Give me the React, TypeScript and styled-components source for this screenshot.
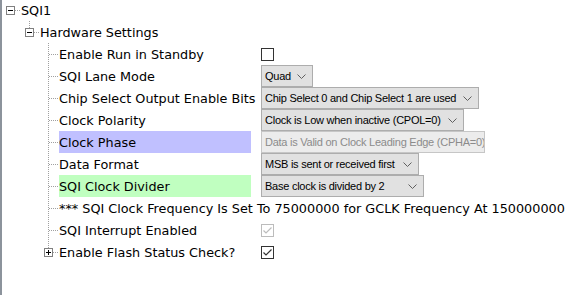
import styled, { createGlobalStyle } from "styled-components"

const GlobalStyle = createGlobalStyle`
  html, body {
    margin: 0;
    padding: 0;
    background: #ffffff;
  }
  body {
    width: 575px;
    height: 295px;
    overflow: hidden;
  }
`

const Panel = styled.div`
  width: 573px;
  height: 296px;
  margin-top: -1px;
  border-left: 2px solid #8c939c;
  font-family: "DejaVu Sans", Verdana, sans-serif;
  font-size: 12.8px;
  color: #000;
`

const Row = styled.div`
  display: grid;
  grid-template-columns: 249px 1fr;
  column-gap: 10px;
  height: 22px;
`

const TreeCell = styled.div<{ $level: number }>`
  display: flex;
  padding-left: ${(p) => p.$level * 19}px;
  min-width: 0;
`

const Label = styled.div<{ $tone?: "blue" | "green" }>`
  flex: 1;
  display: flex;
  align-items: center;
  white-space: nowrap;
  background: ${(p) =>
    p.$tone === "blue" ? "#c0c0ff" : p.$tone === "green" ? "#c0ffc0" : "transparent"};
`

const ControlCell = styled.div`
  display: flex;
  align-items: center;
`

const SelectBox = styled.div<{ $width: number; $disabled?: boolean }>`
  box-sizing: border-box;
  width: ${(p) => p.$width}px;
  height: 22px;
  display: flex;
  align-items: center;
  justify-content: space-between;
  padding: 0 ${(p) => (p.$disabled ? 0 : 6)}px 0 3px;
  border: 1px solid ${(p) => (p.$disabled ? "#c6c6c6" : "#adadad")};
  background: ${(p) => (p.$disabled ? "#ececec" : "#e1e1e1")};
  color: ${(p) => (p.$disabled ? "#8b8b8b" : "#000")};
  font-family: "Liberation Sans", Arial, sans-serif;
  font-size: 11px;
  letter-spacing: -0.25px;
  white-space: nowrap;
  overflow: hidden;
`

const Check = styled.div<{ $disabled?: boolean }>`
  box-sizing: border-box;
  width: 13px;
  height: 13px;
  border: 1px solid ${(p) => (p.$disabled ? "#bcbcbc" : "#333333")};
  background: #fff;
  display: flex;
  align-items: center;
  justify-content: center;
`

type ConnectorProps = {
  line?: boolean
  last?: boolean
  expander?: "open" | "closed"
}

function Connector({ line, last, expander }: ConnectorProps) {
  return (
    <svg width="19" height="22" viewBox="0 0 19 22" shapeRendering="crispEdges" style={{ flex: "none" }}>
      {line && (
        <line x1="8.5" y1="0" x2="8.5" y2={last ? 11 : 22} stroke="#a0a0a0" strokeDasharray="1 1" />
      )}
      <line x1={expander ? 13 : 9} y1="11.5" x2="18" y2="11.5" stroke="#a0a0a0" strokeDasharray="1 1" />
      {expander && (
        <g>
          <rect x="4.5" y="7.5" width="8" height="8" fill="#fff" stroke="#808080" />
          <line x1="6" y1="11.5" x2="11" y2="11.5" stroke="#000" />
          {expander === "closed" && <line x1="8.5" y1="9" x2="8.5" y2="14" stroke="#000" />}
        </g>
      )}
    </svg>
  )
}

function Chevron({ color = "#606060" }: { color?: string }) {
  return (
    <svg width="9" height="5" viewBox="0 0 9 5" style={{ flex: "none" }}>
      <polyline points="0.5,0.5 4.5,4.5 8.5,0.5" fill="none" stroke={color} strokeWidth="1" />
    </svg>
  )
}

function Select({ value, width, disabled }: { value: string; width: number; disabled?: boolean }) {
  return (
    <SelectBox $width={width} $disabled={disabled}>
      <span>{value}</span>
      {!disabled && <Chevron />}
    </SelectBox>
  )
}

function Checkbox({ checked, disabled }: { checked?: boolean; disabled?: boolean }) {
  return (
    <Check $disabled={disabled}>
      {checked && (
        <svg width="11" height="11" viewBox="0 0 11 11">
          <polyline
            points="1.5,5.5 4,8 9.5,2.5"
            fill="none"
            stroke={disabled ? "#bcbcbc" : "#333"}
            strokeWidth="1.2"
          />
        </svg>
      )}
    </Check>
  )
}

type Item = {
  label: string
  tone?: "blue" | "green"
  control?: React.ReactNode
}

const items: Item[] = [
  { label: "Enable Run in Standby", control: <Checkbox /> },
  { label: "SQI Lane Mode", control: <Select value="Quad" width={52} /> },
  { label: "Chip Select Output Enable Bits", control: <Select value="Chip Select 0 and Chip Select 1 are used" width={218} /> },
  { label: "Clock Polarity", control: <Select value="Clock is Low when inactive (CPOL=0)" width={203} /> },
  {
    label: "Clock Phase",
    tone: "blue",
    control: <Select value="Data is Valid on Clock Leading Edge (CPHA=0)" width={224} disabled />,
  },
  { label: "Data Format", control: <Select value="MSB is sent or received first" width={158} /> },
  { label: "SQI Clock Divider", tone: "green", control: <Select value="Base clock is divided by 2" width={163} /> },
  { label: "*** SQI Clock Frequency Is Set To 75000000 for GCLK Frequency At 150000000" },
  { label: "SQI Interrupt Enabled", control: <Checkbox checked disabled /> },
]

export default function App() {
  return (
    <>
      <GlobalStyle />
      <Panel>
        <Row>
          <TreeCell $level={0}>
            <Connector expander="open" />
            <Label>SQI1</Label>
          </TreeCell>
        </Row>
        <Row>
          <TreeCell $level={1}>
            <Connector line last expander="open" />
            <Label>Hardware Settings</Label>
          </TreeCell>
        </Row>
        {items.map((it) => (
          <Row key={it.label}>
            <TreeCell $level={2}>
              <Connector line />
              <Label $tone={it.tone}>{it.label}</Label>
            </TreeCell>
            <ControlCell>{it.control}</ControlCell>
          </Row>
        ))}
        <Row>
          <TreeCell $level={2}>
            <Connector line last expander="closed" />
            <Label>Enable Flash Status Check?</Label>
          </TreeCell>
          <ControlCell>
            <Checkbox checked />
          </ControlCell>
        </Row>
      </Panel>
    </>
  )
}
